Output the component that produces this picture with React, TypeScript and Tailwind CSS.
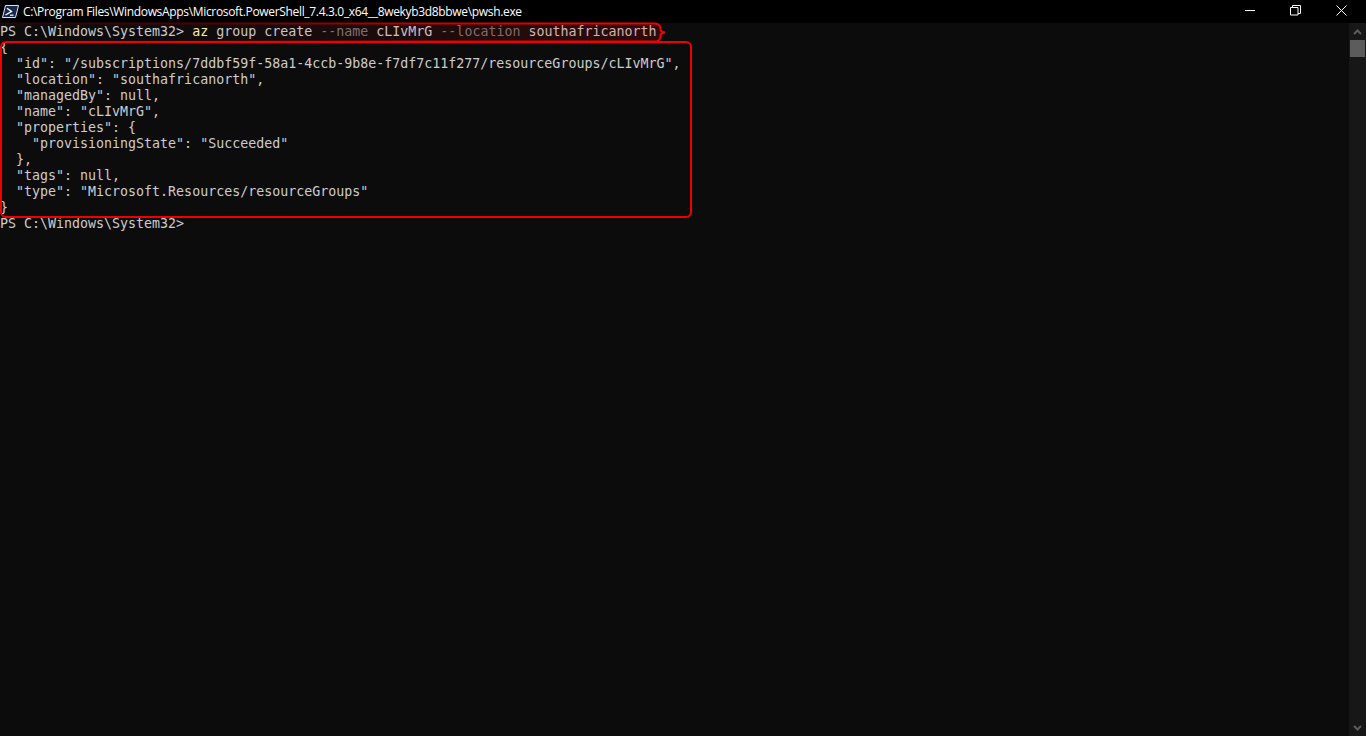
import React from "react";

const json = [
  "{",
  '  "id": "/subscriptions/7ddbf59f-58a1-4ccb-9b8e-f7df7c11f277/resourceGroups/cLIvMrG",',
  '  "location": "southafricanorth",',
  '  "managedBy": null,',
  '  "name": "cLIvMrG",',
  '  "properties": {',
  '    "provisioningState": "Succeeded"',
  "  },",
  '  "tags": null,',
  '  "type": "Microsoft.Resources/resourceGroups"',
  "}",
  "PS C:\\Windows\\System32> ",
];

function Line({ children }: { children: React.ReactNode }) {
  return <div className="h-4 whitespace-pre">{children}</div>;
}

export default function App() {
  return (
    <div className="flex h-[736px] w-[1366px] flex-col overflow-hidden bg-[#0c0c0c]">
      <header className="flex h-[23px] shrink-0 items-center bg-black text-white">
        <svg width="17" height="15" viewBox="0 0 17 15" className="ml-[2px]">
          <path d="M3.5 1.5h13l-3 12h-13z" fill="#16294f" stroke="#dfe6f2" strokeWidth="1" />
          <path d="M5 4.2l4.5 3.3-6 3.5" fill="none" stroke="#fff" strokeWidth="1.4" />
          <path d="M8 11.2h3.5" stroke="#fff" strokeWidth="1.2" />
        </svg>
        <span className="ml-[4px] font-['Open_Sans',sans-serif] text-xs tracking-[-0.33px]">
          C:\Program Files\WindowsApps\Microsoft.PowerShell_7.4.3.0_x64__8wekyb3d8bbwe\pwsh.exe
        </span>
        <div className="ml-auto flex h-full items-center pb-[3px]">
          <svg width="11" height="11" viewBox="0 0 11 11" className="mr-[34px]">
            <path d="M0 5.5h10" stroke="#fff" />
          </svg>
          <svg width="11" height="11" viewBox="0 0 11 11" className="mr-[35px]">
            <path d="M.5 2.5h7.5v7.5h-7.5zM2.5 2.5v-2h8v8h-2.5" fill="none" stroke="#fff" />
          </svg>
          <svg width="11" height="11" viewBox="0 0 11 11" className="mr-[19px]">
            <path d="M.5.5l10 10M10.5.5l-10 10" stroke="#fff" />
          </svg>
        </div>
      </header>
      <div className="flex min-h-0 flex-1">
        <main className="relative flex-1 pt-px font-['DejaVu_Sans_Mono',monospace] text-[13.3px] leading-4 text-[#cccccc]">
          <Line>
            PS C:\Windows\System32&gt; <span className="text-[#f9f1a5]">az</span>{" "}
            <span>group create </span>
            <span className="text-[#767676]">--name</span> cLIvMrG{" "}
            <span className="text-[#767676]">--location</span> southafricanorth
          </Line>
          {json.map((l, i) => (
            <Line key={i}>{l}</Line>
          ))}
          <svg width="672" height="24" viewBox="0 0 672 24" className="pointer-events-none absolute top-[-3px] left-0">
            <defs>
              <linearGradient id="tint" gradientUnits="userSpaceOnUse" x1="150" y1="0" x2="660" y2="0">
                <stop offset="0" stopColor="#ff0000" stopOpacity="0" />
                <stop offset="1" stopColor="#ff0000" stopOpacity="0.14" />
              </linearGradient>
              <linearGradient id="edge" gradientUnits="userSpaceOnUse" x1="0" y1="0" x2="660" y2="0">
                <stop offset="0" stopColor="#200808" />
                <stop offset="0.3" stopColor="#500000" />
                <stop offset="0.68" stopColor="#d00000" />
                <stop offset="0.9" stopColor="#f00000" />
              </linearGradient>
            </defs>
            <path
              d="M0 3.5H654Q660 3.5 660.5 8.5V10Q661 12 665 12.5Q661 13 660.5 15V17Q660 21.5 654 21.5H0"
              fill="url(#tint)"
              stroke="url(#edge)"
              strokeWidth="2"
            />
          </svg>
          <div className="absolute top-[18px] left-0 h-[177px] w-[692px] rounded-md border-2 border-[#f00000]" />
        </main>
        <aside className="flex w-[17px] shrink-0 flex-col items-center bg-[#171717]">
          <svg width="9" height="6" viewBox="0 0 9 6" className="mt-[6px]">
            <path d="M1 5l3.5-3.5L8 5" fill="none" stroke="#5c5c5c" strokeWidth="2" />
          </svg>
          <div className="mt-[5px] h-[17px] w-[15px] bg-[#5c5c5c]" />
          <svg width="9" height="6" viewBox="0 0 9 6" className="mt-auto mb-[5px]">
            <path d="M1 1l3.5 3.5L8 1" fill="none" stroke="#5c5c5c" strokeWidth="2" />
          </svg>
        </aside>
      </div>
    </div>
  );
}
